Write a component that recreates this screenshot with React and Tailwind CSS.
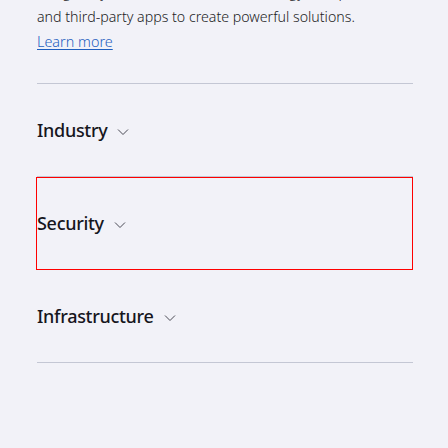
import React from "react";

function Chevron() {
  return (
    <svg width="12" height="8" viewBox="0 0 12 8" fill="none" className="ml-[10px] mt-[3px]">
      <path d="M1 1.5 L6 6.5 L11 1.5" stroke="#4a4a55" strokeWidth="1" />
    </svg>
  );
}

function Item({ label, focused }) {
  return (
    <div className="relative h-[93px] border-b border-[#c4c7d4] flex items-center">
      <span className="text-[18px] font-medium tracking-[-0.3px] text-[#16161d] leading-none">{label}</span>
      <Chevron />
      {focused && (
        <div className="absolute top-0 -bottom-px -left-px right-0 border border-[#ff0000]" />
      )}
    </div>
  );
}

export default function App() {
  return (
    <div
      className="w-[448px] h-[448px] overflow-hidden bg-[#f2f2f8] pl-[37px] pr-[35px] pt-px"
      style={{ fontFamily: '"Noto Sans", "Open Sans", sans-serif' }}
    >
      <div className="border-b border-[#c4c7d4] pb-[29px] -mt-[20px]">
        <p className="text-[14.2px] leading-[24px] font-light text-[#1c1c24] whitespace-nowrap">
          Integrate your data, Microsoft technology, and partner
          <br />
          and third-party apps to create powerful solutions.
        </p>
        <a href="#" className="inline-block text-[14.4px] leading-[24px] font-light text-[#1f5fbf] underline underline-offset-2">
          Learn more
        </a>
      </div>
      <Item label="Industry" />
      <Item label="Security" focused />
      <Item label="Infrastructure" />
    </div>
  );
}
